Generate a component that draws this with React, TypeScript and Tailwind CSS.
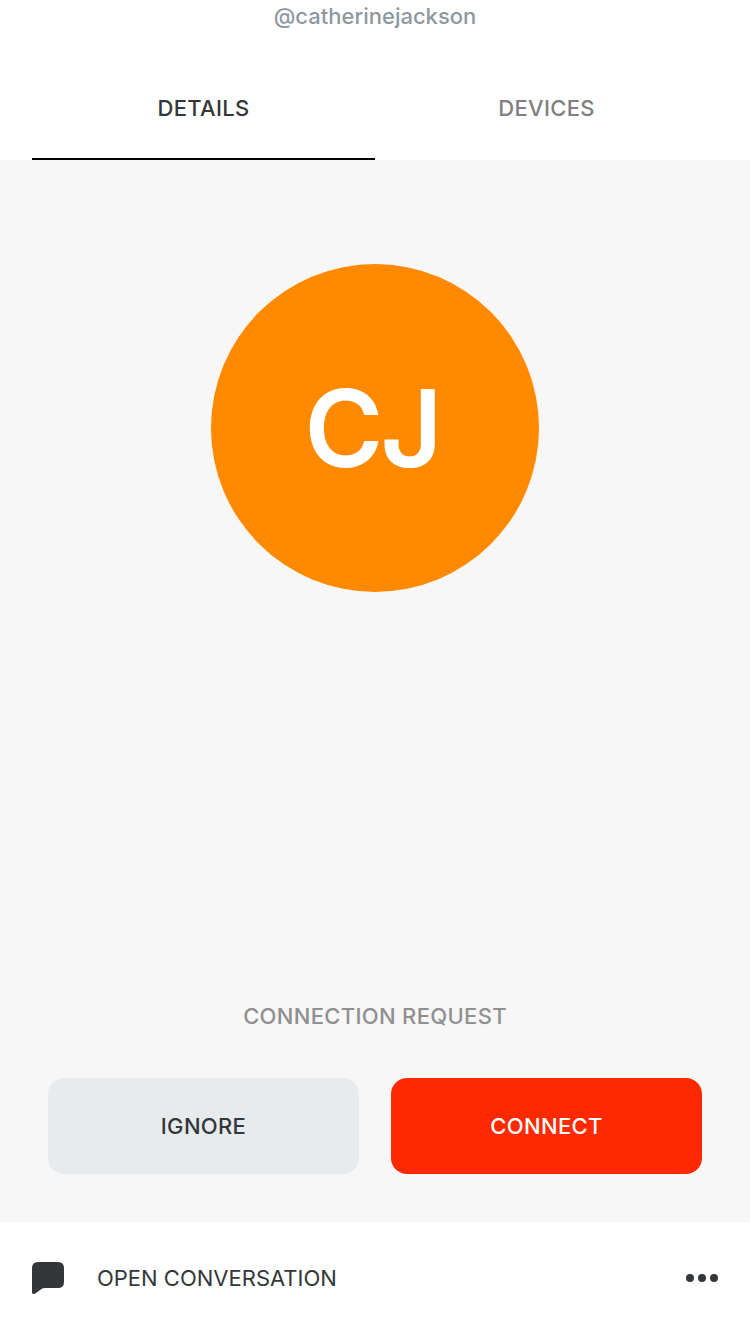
export default function App() {
  return (
    <main className="flex h-[1334px] w-[750px] flex-col overflow-hidden bg-[#f7f7f7] font-['Inter',sans-serif] text-[22px] leading-8 font-[550] tracking-[0.32px] text-[#33373a]">
      <header className="flex h-40 flex-col bg-white">
        <p className="h-14 text-center font-medium tracking-normal text-[#8d989f]">@catherinejackson</p>
        <nav className="grid flex-1 grid-cols-2 px-8">
          <button className="border-b-2 border-black pt-0.5">DETAILS</button>
          <button className="border-b-2 border-transparent pt-0.5 text-[#808080]">DEVICES</button>
        </nav>
      </header>
      <section className="flex flex-1 flex-col items-center px-12 pt-[104px] pb-12">
        <div className="flex size-[328px] items-center justify-center rounded-full bg-[#ff8a00] pr-[6px] text-[107px] font-semibold tracking-[-3px] text-white">CJ</div>
        <h2 className="mt-auto mb-[46px] text-[#909090]">CONNECTION REQUEST</h2>
        <div className="grid w-full grid-cols-2 gap-8">
          <button className="h-24 rounded-2xl bg-[#e7ebee]">IGNORE</button>
          <button className="h-24 rounded-2xl bg-[#ff2900] text-white">CONNECT</button>
        </div>
      </section>
      <footer className="flex h-28 items-center bg-white px-8 font-normal tracking-normal">
        <svg className="size-8" viewBox="0 0 32 32" fill="#33373a"><path d="M6 0h20q6 0 6 6v14q0 6-6 6H13q-2 0-3.5 1L4 31q-4 2.5-4-1V6q0-6 6-6Z" /></svg>
        <span className="ml-[33px] flex-1">OPEN CONVERSATION</span>
        <svg className="h-2 w-8" viewBox="0 0 32 8" fill="#33373a"><circle cx="4" cy="4" r="4" /><circle cx="16" cy="4" r="4" /><circle cx="28" cy="4" r="4" /></svg>
      </footer>
    </main>
  );
}
